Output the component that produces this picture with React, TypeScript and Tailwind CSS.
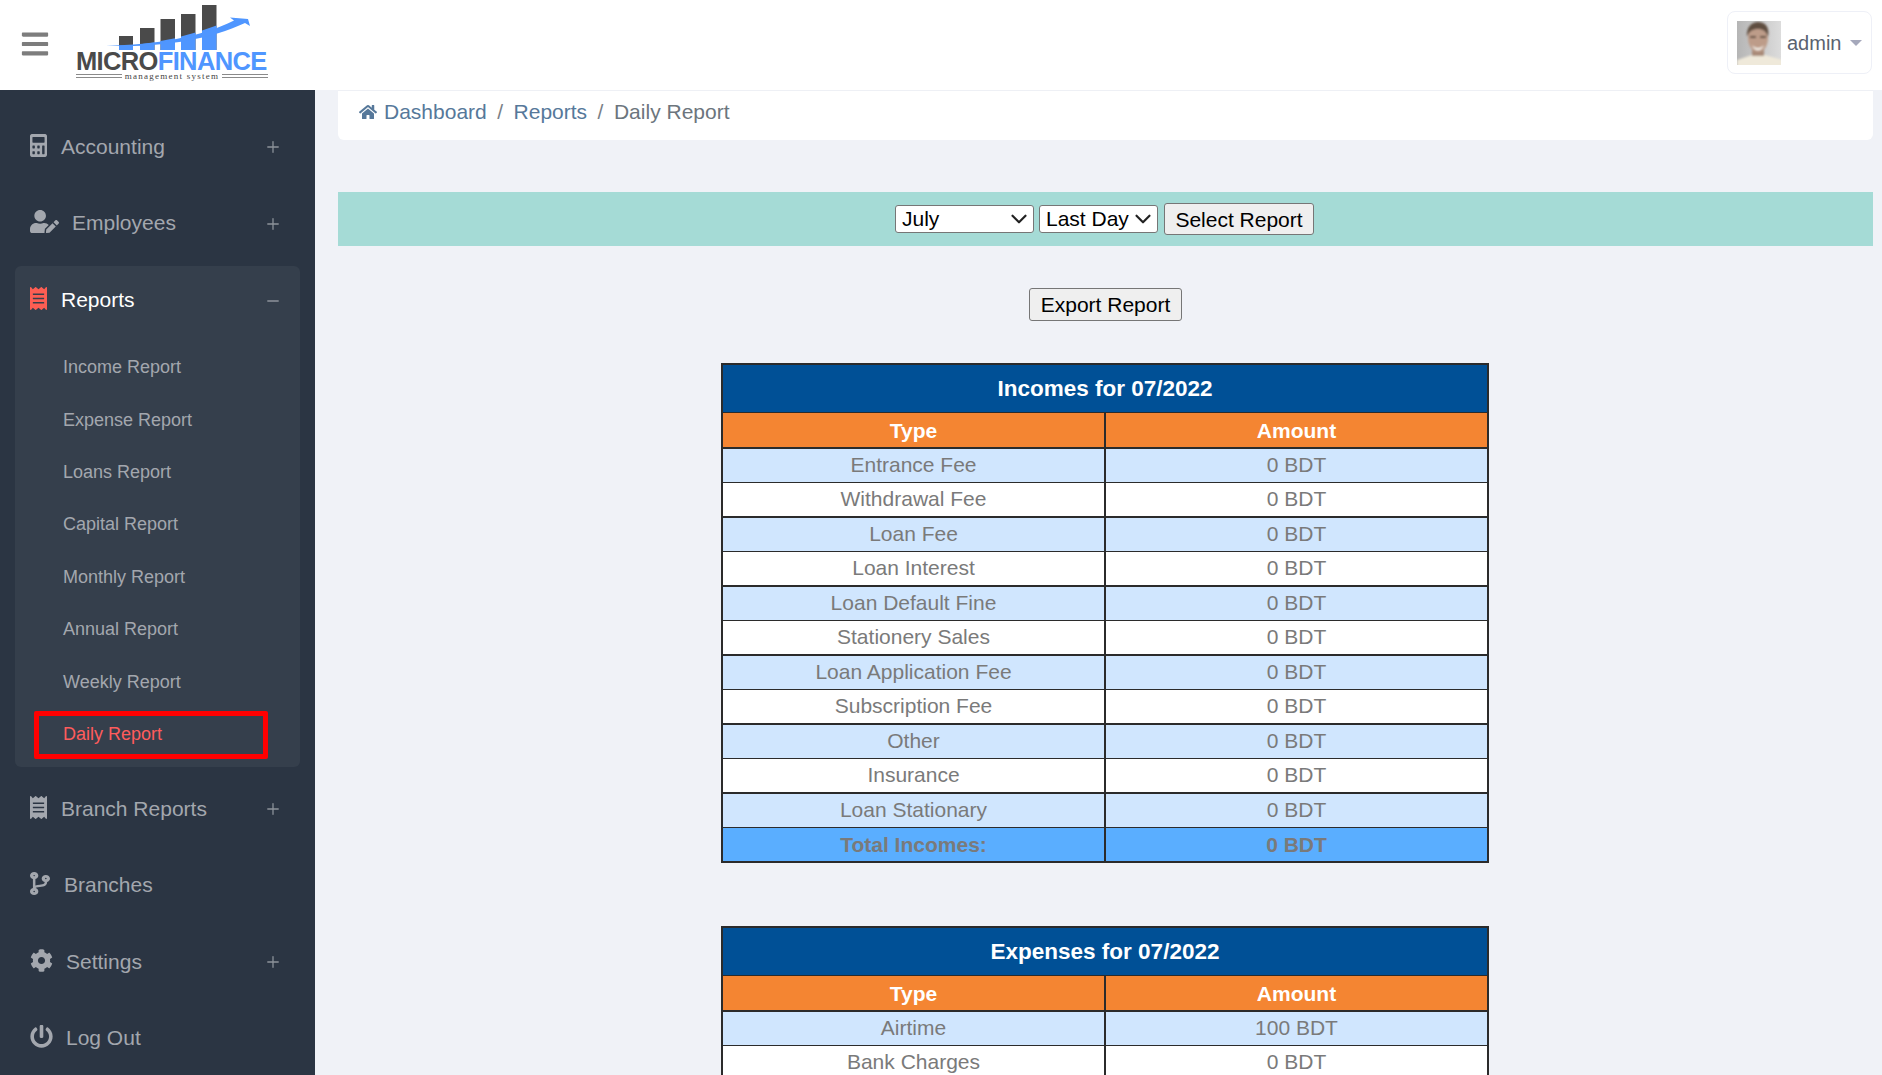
import { ChevronDown, Minus, Plus } from "lucide-react";
import { FaBars, FaCalculator, FaCodeBranch, FaCog, FaHome, FaPowerOff, FaReceipt, FaUserEdit } from "react-icons/fa";

const reportLinks = ["Income Report", "Expense Report", "Loans Report", "Capital Report", "Monthly Report", "Annual Report", "Weekly Report"];

const incomes = [
    "Entrance Fee",
    "Withdrawal Fee",
    "Loan Fee",
    "Loan Interest",
    "Loan Default Fine",
    "Stationery Sales",
    "Loan Application Fee",
    "Subscription Fee",
    "Other",
    "Insurance",
    "Loan Stationary",
];

const Logo = () => {
    return (
        <div className="flex w-[192px] flex-col">
            <svg width="192" height="46" viewBox="0 0 192 46" className="block">
                <rect x="43" y="32" width="14" height="14" fill="#4a4a4a" />
                <rect x="64" y="24" width="14.5" height="22" fill="#4a4a4a" />
                <rect x="84.5" y="15" width="14.5" height="31" fill="#4a4a4a" />
                <rect x="105" y="10" width="14.5" height="36" fill="#4a4a4a" />
                <rect x="126" y="1" width="14.5" height="45" fill="#4a4a4a" />
                <path d="M43 46V41.6L57 41V46ZM64 46V40.3L78.5 38.6V46ZM84.5 46V37L99 34.2V46ZM105 46V32.6L119.5 28.6V46ZM126 46V26.4L140.5 21.6V46Z" fill="#4f96ff" />
                <path d="M30 41.5C80 41 125 33 158 16.5L154 13.5L172 15L174 22L169 19C130 37 80 44 30 41.5Z" fill="#4f96ff" />
            </svg>
            <div className="whitespace-nowrap text-[25.5px] font-bold leading-[22px] tracking-[-0.65px] font-['Liberation_Sans',sans-serif]">
                <span className="text-[#4a4a4a]">MICRO</span>
                <span className="text-[#4f96ff]">FINANCE</span>
            </div>
            <div className="flex items-center gap-[3px]">
                <div className="h-[4px] flex-1 border-y border-[#8a8a8a]" />
                <span className="text-[9px] leading-[9px] tracking-[1.25px] text-[#444444] font-['Liberation_Serif',serif]">management system</span>
                <div className="h-[4px] flex-1 border-y border-[#8a8a8a]" />
            </div>
        </div>
    );
};

const Avatar = () => {
    return (
        <svg width="44" height="44" viewBox="0 0 44 44" className="block">
            <defs>
                <filter id="soft">
                    <feGaussianBlur stdDeviation="0.9" />
                </filter>
                <linearGradient id="wall" x1="0" x2="1" y1="0" y2="0">
                    <stop offset="0" stopColor="#b5b5b5" />
                    <stop offset="1" stopColor="#dcdcdc" />
                </linearGradient>
            </defs>
            <rect width="44" height="44" fill="url(#wall)" />
            <g filter="url(#soft)">
                <path d="M0 46V39L15 34H28L46 39V46Z" fill="#efe9da" />
                <rect x="15" y="27" width="12" height="8" fill="#a88a78" />
                <ellipse cx="21" cy="17" rx="10" ry="14" fill="#bd9c89" />
                <path d="M10 16C9 6 15 1 21 1C28 1 33 6 31 16C29 10 26 8 21 8C16 8 12 10 10 16Z" fill="#5e4d40" />
                <path d="M15 24C18 28 24 28 27 24C25 31 17 31 15 24Z" fill="#f3efe8" />
                <rect x="13" y="15" width="6" height="2" fill="#5a463a" />
                <rect x="23" y="15" width="6" height="2" fill="#5a463a" />
            </g>
        </svg>
    );
};

const NavItem = ({ icon, label, expandable = true }: { icon: React.ReactNode; label: string; expandable?: boolean }) => {
    return (
        <div className="flex h-[76.5px] items-center pb-[2px] pl-[30px] pr-[33px] text-[#a3a7ae]">
            <span className="mb-[2px] flex">{icon}</span>
            <span className="ml-[14px] flex-1 text-[21px]">{label}</span>
            {expandable && <Plus size={18} strokeWidth={1.7} className="mt-[2px] text-[#8d939b]" />}
        </div>
    );
};

const Sidebar = () => {
    return (
        <aside className="w-[315px] shrink-0 bg-[#2b3543] pt-[19px]">
            <NavItem icon={<FaCalculator className="h-[23px] w-[17px]" preserveAspectRatio="none" />} label="Accounting" />
            <NavItem icon={<FaUserEdit size={29} className="-mr-[1px]" />} label="Employees" />
            <div className="mx-[15px] my-[4px] h-[501px] rounded-[6px] bg-[#353f4c]">
                <div className="flex h-[68px] items-center pb-[1px] pl-[15px] pr-[18px] text-white">
                    <span className="mb-[2px] flex">
                        <FaReceipt className="h-[23px] w-[17px] text-[#fd5e53]" preserveAspectRatio="none" />
                    </span>
                    <span className="ml-[14px] flex-1 text-[21px]">Reports</span>
                    <Minus size={18} strokeWidth={1.7} className="mt-[2px] text-[#8d939b]" />
                </div>
                <ul className="ml-[19px] mt-[7.5px] text-[18px] text-[#a3a7ae]">
                    {reportLinks.map((link) => (
                        <li key={link} className="flex h-[52.4px] items-center pl-[29px]">
                            {link}
                        </li>
                    ))}
                    <li className="flex h-[52.4px] items-center">
                        <div className="mt-[1px] flex h-[48px] w-[234px] items-center rounded-[2px] border-[5px] border-[#ff0000] pl-[24px] text-[#ff5c5c]">
                            Daily Report
                        </div>
                    </li>
                </ul>
            </div>
            <NavItem icon={<FaReceipt className="h-[23px] w-[17px]" preserveAspectRatio="none" />} label="Branch Reports" />
            <NavItem icon={<FaCodeBranch className="h-[23px] w-[20px]" preserveAspectRatio="none" />} label="Branches" expandable={false} />
            <NavItem icon={<FaCog size={23} className="-mr-[1px]" />} label="Settings" />
            <NavItem icon={<FaPowerOff size={23} className="-mr-[1px]" />} label="Log Out" expandable={false} />
        </aside>
    );
};

const Row = ({ label, amount, index }: { label: string; amount: string; index: number }) => {
    const odd = index % 2 === 0;
    return (
        <tr className={odd ? "bg-[#d0e6fe]" : "bg-white"}>
            <td className={`border-r-2 border-[#2b2b2b] pb-[2px] ${odd ? "h-[34px] border-b" : "h-[35px] border-b-2"}`}>{label}</td>
            <td className={`border-[#2b2b2b] pb-[2px] ${odd ? "h-[34px] border-b" : "h-[35px] border-b-2"}`}>{amount}</td>
        </tr>
    );
};

const ReportTable = ({ title, rows, total }: { title: string; rows: [string, string][]; total?: string }) => {
    return (
        <table className="w-[768px] table-fixed border-separate border-spacing-0 border-x-2 border-t-2 border-[#2b2b2b] text-center text-[21px] leading-[26px] text-[#7a7a7a]">
            <colgroup>
                <col className="w-[383px]" />
                <col className="w-[381px]" />
            </colgroup>
            <thead>
                <tr>
                    <th colSpan={2} className="h-[48px] border-b border-[#2b2b2b] bg-[#005096] text-[22.5px] font-bold text-white">
                        {title}
                    </th>
                </tr>
                <tr className="bg-[#f48532] font-bold text-white">
                    <th className="h-[36px] border-r-2 border-b-2 border-[#2b2b2b] pt-[2px]">Type</th>
                    <th className="h-[36px] border-b-2 border-[#2b2b2b] pt-[2px]">Amount</th>
                </tr>
            </thead>
            <tbody>
                {rows.map(([label, amount], i) => (
                    <Row key={label} label={label} amount={amount} index={i} />
                ))}
                {total && (
                    <tr className="bg-[#5aaeff] font-bold">
                        <td className="h-[35px] border-r-2 border-b-2 border-[#2b2b2b]">Total Incomes:</td>
                        <td className="h-[35px] border-b-2 border-[#2b2b2b]">{total}</td>
                    </tr>
                )}
            </tbody>
        </table>
    );
};

const Select = ({ value, width }: { value: string; width: string }) => {
    return (
        <div className={`relative ${width}`}>
            <select
                className="h-[28px] w-full appearance-none rounded-[3px] border border-[#767676] bg-white pl-[6px] text-[21px] leading-[24px] text-black"
                defaultValue={value}
            >
                <option>{value}</option>
            </select>
            <ChevronDown size={26} strokeWidth={2} className="pointer-events-none absolute right-[2px] top-[1px] text-[#222222]" />
        </div>
    );
};

const buttonClass = "rounded-[3px] border border-[#767676] bg-[#efefef] text-[21px] text-black";

const App = () => {
    const incomeRows = incomes.map((name): [string, string] => [name, "0 BDT"]);

    return (
        <div className="flex h-[1075px] flex-col overflow-hidden bg-[#f0f2f7] font-['Liberation_Sans',Arial,sans-serif]">
            <header className="flex h-[90px] shrink-0 items-center bg-white pl-[20px] pr-[10px]">
                <FaBars size={30} className="mb-[2px] text-[#7d7d7d]" />
                <div className="mb-[6px] ml-[26px]">
                    <Logo />
                </div>
                <div className="mb-[5px] ml-auto flex h-[63px] w-[145px] items-center rounded-[8px] border border-[#eef0f7] pl-[9px]">
                    <Avatar />
                    <span className="ml-[6px] text-[20px] text-[#5a6270]">admin</span>
                    <span className="ml-[9px] h-0 w-0 border-x-[6px] border-t-[6px] border-x-transparent border-t-[#a5a8bb]" />
                </div>
            </header>
            <div className="flex min-h-0 flex-1">
                <Sidebar />
                <main className="min-w-0 flex-1 pl-[23px] pr-[9px]">
                    <nav className="flex h-[50px] items-center rounded-b-[6px] border-t border-[#eef0f5] bg-white pb-[8px] pl-[21px] text-[21px]">
                        <FaHome size={18} className="text-[#56789a]" />
                        <span className="ml-[7px] text-[#56789a]">Dashboard</span>
                        <span className="mx-[10.5px] text-[#7a7f87]">/</span>
                        <span className="text-[#56789a]">Reports</span>
                        <span className="mx-[10.5px] text-[#7a7f87]">/</span>
                        <span className="text-[#6c757d]">Daily Report</span>
                    </nav>
                    <div className="mt-[52px] flex h-[54px] items-center justify-center gap-[5px] bg-[#a5dbd6] pr-[2px]">
                        <Select value="July" width="w-[139px]" />
                        <Select value="Last Day" width="w-[119px]" />
                        <button className={`${buttonClass} ml-[1px] h-[32px] w-[150px]`}>Select Report</button>
                    </div>
                    <div className="mt-[42px] flex justify-center">
                        <button className={`${buttonClass} h-[33px] w-[153px]`}>Export Report</button>
                    </div>
                    <div className="mt-[42px] flex flex-col items-center gap-[63px] pr-[1px]">
                        <ReportTable title="Incomes for 07/2022" rows={incomeRows} total="0 BDT" />
                        <ReportTable title="Expenses for 07/2022" rows={[["Airtime", "100 BDT"], ["Bank Charges", "0 BDT"]]} />
                    </div>
                </main>
            </div>
        </div>
    );
};

export default App;
